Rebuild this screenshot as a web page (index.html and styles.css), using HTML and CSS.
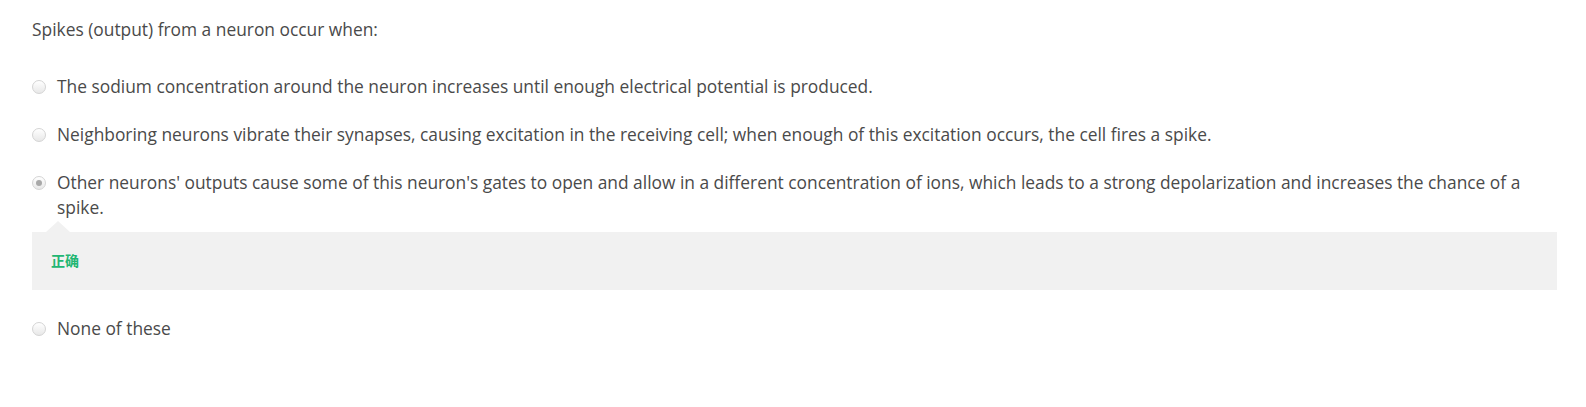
FILE: index.html
```html
<!DOCTYPE html>
<html>
<head>
<meta charset="utf-8">
<link rel="stylesheet" href="styles.css">
</head>
<body>
<div class="quiz">
  <div class="question">Spikes (output) from a neuron occur when:</div>
  <div class="options">
    <div class="option">
      <span class="radio"></span>
      <span class="label">The sodium concentration around the neuron increases until enough electrical potential is produced.</span>
    </div>
    <div class="option">
      <span class="radio"></span>
      <span class="label">Neighboring neurons vibrate their synapses, causing excitation in the receiving cell; when enough of this excitation occurs, the cell fires a spike.</span>
    </div>
    <div class="option selected">
      <span class="radio"><span class="dot"></span></span>
      <span class="label">Other neurons' outputs cause some of this neuron's gates to open and allow in a different concentration of ions, which leads to a strong depolarization and increases the chance of a spike.</span>
    </div>
    <div class="feedback">
      <span class="correct">正确</span>
    </div>
    <div class="option last">
      <span class="radio"></span>
      <span class="label">None of these</span>
    </div>
  </div>
</div>
</body>
</html>
```

FILE: styles.css
```css
html, body {
  margin: 0;
  padding: 0;
  background: #ffffff;
}

.quiz {
  width: 1525px;
  padding: 17px 0 0 32px;
  font-family: "Open Sans", "Noto Sans CJK SC", sans-serif;
  font-size: 17.37px;
  line-height: 25px;
  color: #4a4a4a;
}

.question {
  margin-bottom: 32px;
}

.options {
  display: flex;
  flex-direction: column;
}

.option {
  display: flex;
  align-items: flex-start;
  margin-bottom: 23px;
}

.option.selected {
  margin-bottom: 12px;
}

.radio {
  flex: none;
  width: 12px;
  height: 12px;
  margin-top: 5.5px;
  margin-right: 11px;
  border: 1px solid #d4d4d4;
  border-radius: 50%;
  background: linear-gradient(#ffffff, #e8e8e8);
  display: flex;
  align-items: center;
  justify-content: center;
}

.dot {
  width: 6px;
  height: 6px;
  border-radius: 50%;
  background: #a8a8a8;
}

.label {
  flex: 1;
}

.feedback {
  position: relative;
  background: #f1f1f1;
  height: 58px;
  padding-left: 19px;
  display: flex;
  align-items: center;
  margin-bottom: 26px;
}

.feedback::before {
  content: "";
  position: absolute;
  left: 14px;
  top: -11px;
  border-left: 12px solid transparent;
  border-right: 12px solid transparent;
  border-bottom: 11px solid #f1f1f1;
}

.correct {
  color: #22b673;
  font-size: 14px;
  line-height: 20px;
  font-weight: bold;
}
```
